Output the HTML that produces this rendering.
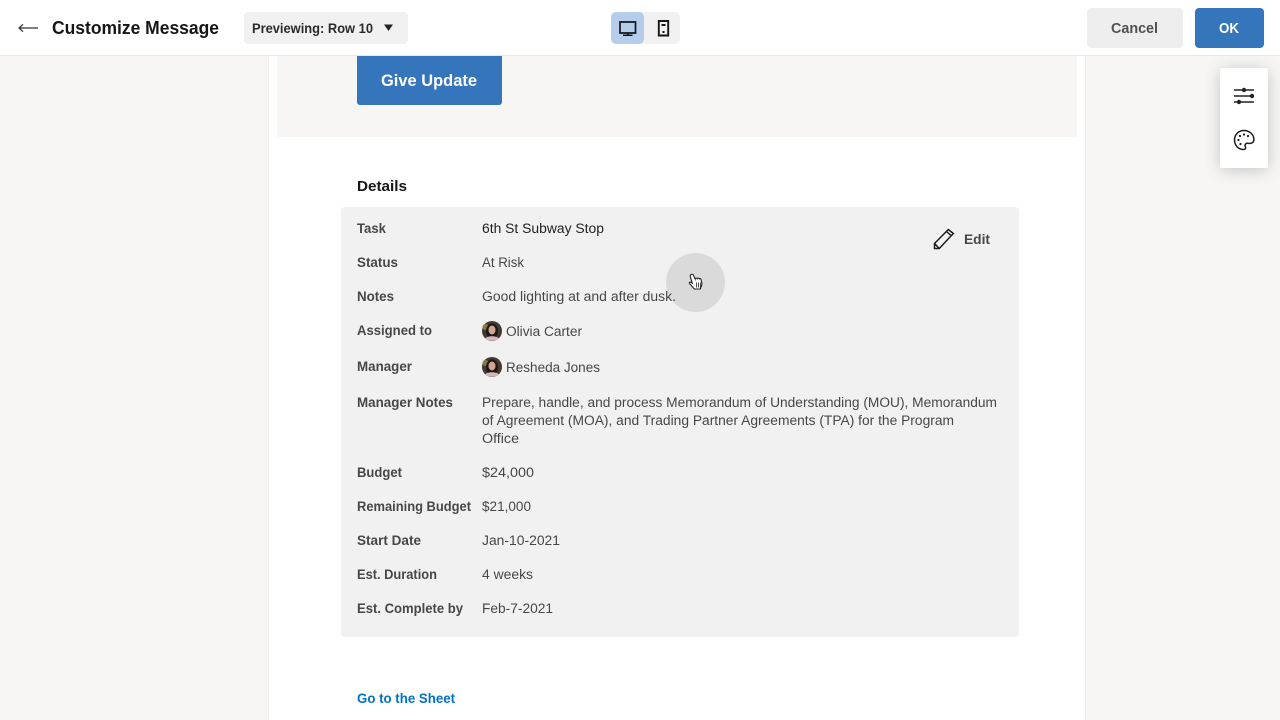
<!DOCTYPE html>
<html><head><meta charset="utf-8"><style>
html,body{margin:0;padding:0;width:1280px;height:720px;overflow:hidden;background:#f7f6f4}
div{position:absolute}
svg{position:absolute;left:0;top:0}
text{font-family:"Liberation Sans",sans-serif;font-size:13.500px;fill:#474747}
.l{font-weight:700}
</style></head><body>
<div style="left:269px;top:56px;width:816px;height:664px;background:#fff;box-shadow:0 0 0 1px #f1f0ee"></div>
<div style="left:277px;top:56px;width:800px;height:81px;background:#f7f6f4"></div>
<div style="left:357px;top:56px;width:145px;height:49px;background:#3575bb;border-radius:0 0 3px 3px"></div>
<div style="left:341px;top:207px;width:678px;height:430px;background:#f1f1f1;border-radius:4px"></div>
<div style="left:666px;top:253px;width:59px;height:59px;border-radius:50%;background:#dadada"></div>
<div style="left:0;top:0;width:1280px;height:55px;background:#fff;border-bottom:1px solid #e9e9e9"></div>
<div style="left:244px;top:12px;width:164px;height:32px;background:#f1f1f1;border-radius:4px"></div>
<div style="left:611px;top:12px;width:69px;height:32px;background:#f1f1f1;border-radius:5px"></div>
<div style="left:611px;top:12px;width:33px;height:32px;background:#b3cdeb;border-radius:5px"></div>
<div style="left:1087px;top:8px;width:96px;height:40px;background:#eeeeee;border-radius:4px"></div>
<div style="left:1195px;top:8px;width:69px;height:40px;background:#3575bb;border-radius:4px"></div>
<div style="left:1220px;top:68px;width:48px;height:100px;background:#fff;border-radius:2px;box-shadow:0 2px 16px rgba(0,0,0,.2)"></div>
<svg width="1280" height="720" viewBox="0 0 1280 720">
<path d="M38 28H19M23 24.300l-4 3.700 4 3.700" fill="none" stroke="#333" stroke-width="1.200"/>
<text x="52" y="34" textLength="167" lengthAdjust="spacingAndGlyphs" style="font-size:18.500px;font-weight:700;fill:#161616">Customize Message</text>
<text x="252" y="33" textLength="121" lengthAdjust="spacingAndGlyphs" class="l" style="fill:#2a2a2a">Previewing: Row 10</text>
<path d="M384 24.500h9l-4.500 6.500z" fill="#222"/>
<path d="M620 22h15.500v11H620z" fill="none" stroke="#161616" stroke-width="1.700"/><path d="M627.800 33v2.500M623 35.300h9.500" stroke="#161616" stroke-width="1.500" fill="none"/>
<path d="M658.800 21h9.400v14.500h-9.400z" fill="none" stroke="#161616" stroke-width="1.900"/><path d="M661.500 24h4v2h-4zM662.500 31h2v2h-2z" fill="#161616"/>
<text x="1111" y="33" textLength="47" lengthAdjust="spacingAndGlyphs" class="l" style="font-size:14.500px;fill:#505050">Cancel</text>
<text x="1219" y="33" textLength="20" lengthAdjust="spacingAndGlyphs" class="l" style="font-size:14.500px;fill:#fff">OK</text>
<path d="M1234 90h20M1234 96h20M1234 102h20" stroke="#222" stroke-width="1.500"/><circle cx="1244" cy="90" r="2.200" fill="#222"/><circle cx="1252" cy="96" r="2.200" fill="#222"/><circle cx="1239" cy="102" r="2.200" fill="#222"/>
<path d="M1244 130.500c-5.500 0-9.500 4.200-9.500 9.500s4 9.500 8.800 9.500c2.400 0 2.700-1.500 2-3-.8-1.800.4-3.300 2.300-3.200 1.200.1 2.300.3 3.600-.1 1.700-.5 2.700-1.800 2.700-3.700 0-5-4.600-9-9.900-9z" fill="none" stroke="#1c1c1c" stroke-width="1.500"/>
<g fill="#1c1c1c"><circle cx="1238.500" cy="140" r="1.100"/><circle cx="1240" cy="136" r="1.100"/><circle cx="1244" cy="134.500" r="1.100"/><circle cx="1248" cy="136" r="1.100"/><circle cx="1240.500" cy="144" r="1.100"/></g>
<text x="381" y="86" textLength="96" lengthAdjust="spacingAndGlyphs" class="l" style="font-size:16.500px;fill:#fff">Give Update</text>
<text x="357" y="191" textLength="50" lengthAdjust="spacingAndGlyphs" class="l" style="font-size:15px;fill:#161616">Details</text>
<text class="l" x="357" y="233" textLength="29" lengthAdjust="spacingAndGlyphs">Task</text>
<text x="482" y="233" textLength="122" lengthAdjust="spacingAndGlyphs" style="fill:#222">6th St Subway Stop</text>
<text class="l" x="357" y="267" textLength="41" lengthAdjust="spacingAndGlyphs">Status</text>
<text x="482" y="267" textLength="42" lengthAdjust="spacingAndGlyphs">At Risk</text>
<text class="l" x="357" y="301" textLength="37" lengthAdjust="spacingAndGlyphs">Notes</text>
<text x="482" y="301" textLength="194" lengthAdjust="spacingAndGlyphs">Good lighting at and after dusk.</text>
<text class="l" x="357" y="335" textLength="75" lengthAdjust="spacingAndGlyphs">Assigned to</text>
<text x="506" y="336" textLength="76" lengthAdjust="spacingAndGlyphs">Olivia Carter</text>
<text class="l" x="357" y="371" textLength="55" lengthAdjust="spacingAndGlyphs">Manager</text>
<text x="506" y="372" textLength="94" lengthAdjust="spacingAndGlyphs">Resheda Jones</text>
<text class="l" x="357" y="407" textLength="96" lengthAdjust="spacingAndGlyphs">Manager Notes</text>
<text x="482" y="407" textLength="515" lengthAdjust="spacingAndGlyphs">Prepare, handle, and process Memorandum of Understanding (MOU), Memorandum</text>
<text x="482" y="425" textLength="472" lengthAdjust="spacingAndGlyphs">of Agreement (MOA), and Trading Partner Agreements (TPA) for the Program</text>
<text x="482" y="443" textLength="37" lengthAdjust="spacingAndGlyphs">Office</text>
<text class="l" x="357" y="477" textLength="45" lengthAdjust="spacingAndGlyphs">Budget</text>
<text x="482" y="477" textLength="52" lengthAdjust="spacingAndGlyphs">$24,000</text>
<text class="l" x="357" y="511" textLength="114" lengthAdjust="spacingAndGlyphs">Remaining Budget</text>
<text x="482" y="511" textLength="49" lengthAdjust="spacingAndGlyphs">$21,000</text>
<text class="l" x="357" y="545" textLength="64" lengthAdjust="spacingAndGlyphs">Start Date</text>
<text x="482" y="545" textLength="78" lengthAdjust="spacingAndGlyphs">Jan-10-2021</text>
<text class="l" x="357" y="579" textLength="80" lengthAdjust="spacingAndGlyphs">Est. Duration</text>
<text x="482" y="579" textLength="51" lengthAdjust="spacingAndGlyphs">4 weeks</text>
<text class="l" x="357" y="613" textLength="106" lengthAdjust="spacingAndGlyphs">Est. Complete by</text>
<text x="482" y="613" textLength="71" lengthAdjust="spacingAndGlyphs">Feb-7-2021</text>
<text class="l" x="964" y="244" textLength="26" lengthAdjust="spacingAndGlyphs" style="font-size:14px">Edit</text>
<text class="l" x="357" y="703" textLength="98" lengthAdjust="spacingAndGlyphs" style="fill:#0073c4">Go to the Sheet</text>
<path d="M934.500 248.500v-5l13.800-14 5 4-14 15zM946.500 231.500l5 4.500M934.800 243.800l4 4.200" fill="none" stroke="#1c1c1c" stroke-width="1.500"/>
<g><circle cx="492" cy="331" r="10" fill="#3f3a32"/><circle cx="485.500" cy="327" r="3" fill="#8c7a3c"/><ellipse cx="492" cy="331" rx="6" ry="7.500" fill="#1f1715"/><ellipse cx="492" cy="330" rx="3.500" ry="4.500" fill="#d0a592"/><path d="M485 338.500c2-3 12-3 14 0-3 3-11 3-14 0z" fill="#d3b8bb"/></g>
<g><circle cx="492" cy="367" r="10" fill="#3f3a32"/><circle cx="485.500" cy="363" r="3" fill="#8c7a3c"/><ellipse cx="492" cy="367" rx="6" ry="7.500" fill="#1f1715"/><ellipse cx="492" cy="366" rx="3.500" ry="4.500" fill="#d0a592"/><path d="M485 374.500c2-3 12-3 14 0-3 3-11 3-14 0z" fill="#d3b8bb"/></g>
<path d="M691.500 274.500c.8-.5 1.700 0 2 .8l1.700 3.700c.1-1 1.500-1.200 2-.3.3-.8 1.600-.8 2 .1.500-.5 1.500-.3 1.800.5l.8 3.500c.3 1.800-.2 3.400-1 4.700l-.5 1.500h-6l-4.800-5.500c-.6-.8.3-1.900 1.300-1.300l1.500 1-2-6.500c-.2-.8-.1-1.400.2-1.700z" fill="#fff" stroke="#222" stroke-width="1.100"/>
<path d="M696.500 282.500v5M698.500 282.500v5M700.500 282.500v5" stroke="#222" stroke-width=".8"/>
</svg>
</body></html>
